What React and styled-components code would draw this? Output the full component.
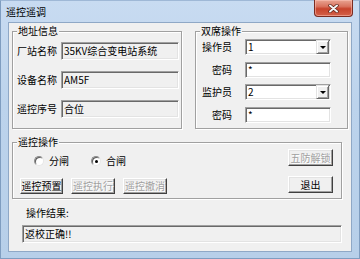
import styled, { createGlobalStyle } from "styled-components";

const GlobalStyle = createGlobalStyle`
  html, body { margin: 0; padding: 0; background: #ffffff; }
  body {
    font-family: "Noto Sans CJK SC", "Liberation Sans", sans-serif;
    font-size: 10px;
    color: #000;
  }
`;

const Window = styled.div`
  width: 360px;
  height: 259px;
  box-sizing: border-box;
  display: flex;
  flex-direction: column;
  background: linear-gradient(#c8dbf1, #bcd3ec 40%, #b7cfe9);
  border: 1px solid #7f9dc0;
  border-top-color: #9fb8d6;
`;

const TitleBar = styled.div`
  height: 21px;
  display: flex;
  justify-content: space-between;
  align-items: flex-start;
  flex-shrink: 0;
`;

const Title = styled.div`
  margin: 5px 0 0 5px;
  line-height: 12px;
  font-size: 10px;
  color: #000;
`;

const CloseButton = styled.div`
  width: 39px;
  height: 17px;
  box-sizing: border-box;
  margin: -1px 6px 0 0;
  border: 1px solid #7a2b20;
  border-top: none;
  border-radius: 0 0 4px 4px;
  background: linear-gradient(#e9a492, #d9735f 40%, #c7432c 55%, #d3624a);
  box-shadow: inset 0 0 0 1px rgba(255, 200, 190, 0.5);
  display: flex;
  align-items: center;
  justify-content: center;
`;

const Client = styled.div`
  flex: 1;
  margin: 0 7px 6px 7px;
  background: #f0f0f0;
  border: 1px solid #8fa8c6;
  display: flex;
  flex-direction: column;
`;

const TopRow = styled.div`
  display: flex;
  gap: 13px;
  margin: 8px 0 0 3px;
  height: 98px;
`;

const Group = styled.div`
  position: relative;
  box-sizing: border-box;
  width: ${(p) => p.$w}px;
  height: ${(p) => p.$h}px;
  border: 1px solid #a0a0a0;
  box-shadow: inset 1px 1px 0 #fff, 1px 1px 0 #fff;
`;

const Legend = styled.span`
  position: absolute;
  top: -7px;
  left: 4px;
  padding: 0 1px;
  line-height: 12px;
  background: #f0f0f0;
`;

const LeftBody = styled.div`
  display: flex;
  flex-direction: column;
  gap: 11px;
  padding: 10px 2px 0 4px;
`;

const RightBody = styled.div`
  display: flex;
  flex-direction: column;
  gap: 6.5px;
  padding: 7px 0 0 6px;
`;

const Row = styled.div`
  display: flex;
  align-items: center;
`;

const Label = styled.span`
  width: ${(p) => p.$w}px;
  margin-right: ${(p) => p.$gap || 0}px;
  text-align: ${(p) => p.$align || "left"};
  line-height: 12px;
  white-space: nowrap;
  flex-shrink: 0;
`;

const Field = styled.div`
  box-sizing: border-box;
  width: ${(p) => (p.$w ? `${p.$w}px` : "auto")};
  flex: ${(p) => (p.$w ? "none" : 1)};
  height: ${(p) => p.$h}px;
  display: flex;
  align-items: center;
  padding-left: 2px;
  background: ${(p) => (p.$readOnly ? "#f0f0f0" : "#fff")};
  border: 1px solid;
  border-color: #a0a0a0 #fff #fff #a0a0a0;
  box-shadow: inset 1px 1px 0 #696969, inset -1px -1px 0 #e3e3e3;
  line-height: 12px;
  white-space: nowrap;
  overflow: hidden;
`;

const FieldText = styled.span`
  flex: 1;
`;

const DropButton = styled.span`
  width: 13px;
  height: 100%;
  box-sizing: border-box;
  margin-right: 1px;
  background: #f0f0f0;
  border: 1px solid;
  border-color: #e3e3e3 #696969 #696969 #e3e3e3;
  box-shadow: inset 1px 1px 0 #fff, inset -1px -1px 0 #a0a0a0;
  display: flex;
  align-items: center;
  justify-content: center;
  flex-shrink: 0;
`;

const Arrow = styled.span`
  width: 0;
  height: 0;
  border-left: 3px solid transparent;
  border-right: 3px solid transparent;
  border-top: 3px solid #000;
  margin-top: 1px;
`;

const OpGroup = styled(Group)`
  margin: 13px 0 0 3px;
  display: flex;
  justify-content: space-between;
  padding: 0 8px 0 7px;
`;

const OpLeft = styled.div`
  display: flex;
  flex-direction: column;
  padding-top: 12px;
`;

const RadioRow = styled.div`
  display: flex;
  gap: 22px;
  padding-left: 14px;
  height: 12px;
  align-items: center;
`;

const RadioItem = styled.label`
  display: flex;
  align-items: center;
  gap: 5px;
  line-height: 12px;
`;

const RadioCircle = styled.span`
  width: 10px;
  height: 10px;
  box-sizing: border-box;
  border-radius: 50%;
  border: 1px solid;
  border-color: #8a8a8a #e6e6e6 #e6e6e6 #8a8a8a;
  background: #fff;
  box-shadow: inset 1px 1px 0 #5c5c5c;
  display: flex;
  align-items: center;
  justify-content: center;

  &::after {
    content: "";
    width: 3px;
    height: 3px;
    border-radius: 50%;
    background: ${(p) => (p.$checked ? "#000" : "transparent")};
  }
`;

const ButtonRow = styled.div`
  display: flex;
  gap: 8px;
  margin-top: 11px;
`;

const OpRight = styled.div`
  display: flex;
  flex-direction: column;
  gap: 10px;
  padding-top: 6px;
`;

const Button = styled.button`
  box-sizing: border-box;
  width: ${(p) => p.$w}px;
  height: ${(p) => p.$h}px;
  padding: 0;
  font-family: inherit;
  font-size: 10px;
  line-height: 12px;
  white-space: nowrap;
  background: #f0f0f0;
  color: ${(p) => (p.disabled ? "#a0a0a0" : "#000")};
  text-shadow: ${(p) => (p.disabled ? "1px 1px 0 #fff" : "none")};
  border: 1px solid;
  border-color: #fff #404040 #404040 #fff;
  box-shadow: inset -1px -1px 0 #a0a0a0, inset 1px 1px 0 #e3e3e3;
  display: flex;
  align-items: center;
  justify-content: center;
`;

const ResultLabel = styled.div`
  margin: 8px 0 0 17px;
  line-height: 12px;
`;

const ResultBox = styled(Field)`
  margin: 6px 0 0 13px;
  flex: none;
`;

const CloseIcon = () => (
  <svg width="11" height="9" viewBox="0 0 11 9">
    <path d="M2 1.5 L9 7.5 M9 1.5 L2 7.5" stroke="#5b1f16" strokeWidth="3.4" strokeLinecap="round" />
    <path d="M2 1.5 L9 7.5 M9 1.5 L2 7.5" stroke="#f4f4f4" strokeWidth="2" strokeLinecap="round" />
  </svg>
);

const Combo = ({ value }) => (
  <Field $w={86} $h={16}>
    <FieldText>{value}</FieldText>
    <DropButton>
      <Arrow />
    </DropButton>
  </Field>
);

const App = () => {
  return (
    <>
      <GlobalStyle />
      <Window>
        <TitleBar>
          <Title>遥控遥调</Title>
          <CloseButton>
            <CloseIcon />
          </CloseButton>
        </TitleBar>
        <Client>
          <TopRow>
            <Group $w={170} $h={98}>
              <Legend>地址信息</Legend>
              <LeftBody>
                <Row>
                  <Label $w={44}>厂站名称</Label>
                  <Field $h={18} $readOnly>35KV综合变电站系统</Field>
                </Row>
                <Row>
                  <Label $w={44}>设备名称</Label>
                  <Field $h={18} $readOnly>AM5F</Field>
                </Row>
                <Row>
                  <Label $w={44}>遥控序号</Label>
                  <Field $h={18} $readOnly>合位</Field>
                </Row>
              </LeftBody>
            </Group>
            <Group $w={153} $h={98}>
              <Legend>双席操作</Legend>
              <RightBody>
                <Row>
                  <Label $w={30} $gap={13} $align="right">操作员</Label>
                  <Combo value="1" />
                </Row>
                <Row>
                  <Label $w={30} $gap={13} $align="right">密码</Label>
                  <Field $w={86} $h={16}>*</Field>
                </Row>
                <Row>
                  <Label $w={30} $gap={13} $align="right">监护员</Label>
                  <Combo value="2" />
                </Row>
                <Row>
                  <Label $w={30} $gap={13} $align="right">密码</Label>
                  <Field $w={86} $h={16}>*</Field>
                </Row>
              </RightBody>
            </Group>
          </TopRow>

          <OpGroup $w={330} $h={57}>
            <Legend>遥控操作</Legend>
            <OpLeft>
              <RadioRow>
                <RadioItem>
                  <RadioCircle />
                  分闸
                </RadioItem>
                <RadioItem>
                  <RadioCircle $checked />
                  合闸
                </RadioItem>
              </RadioRow>
              <ButtonRow>
                <Button $w={43} $h={16}>遥控预置</Button>
                <Button $w={44} $h={16} disabled>遥控执行</Button>
                <Button $w={44} $h={16} disabled>遥控撤消</Button>
              </ButtonRow>
            </OpLeft>
            <OpRight>
              <Button $w={45} $h={17} disabled>五防解锁</Button>
              <Button $w={45} $h={17}>退出</Button>
            </OpRight>
          </OpGroup>

          <ResultLabel>操作结果:</ResultLabel>
          <ResultBox $w={320} $h={18} $readOnly>返校正确!!</ResultBox>
        </Client>
      </Window>
    </>
  );
};

export default App;
